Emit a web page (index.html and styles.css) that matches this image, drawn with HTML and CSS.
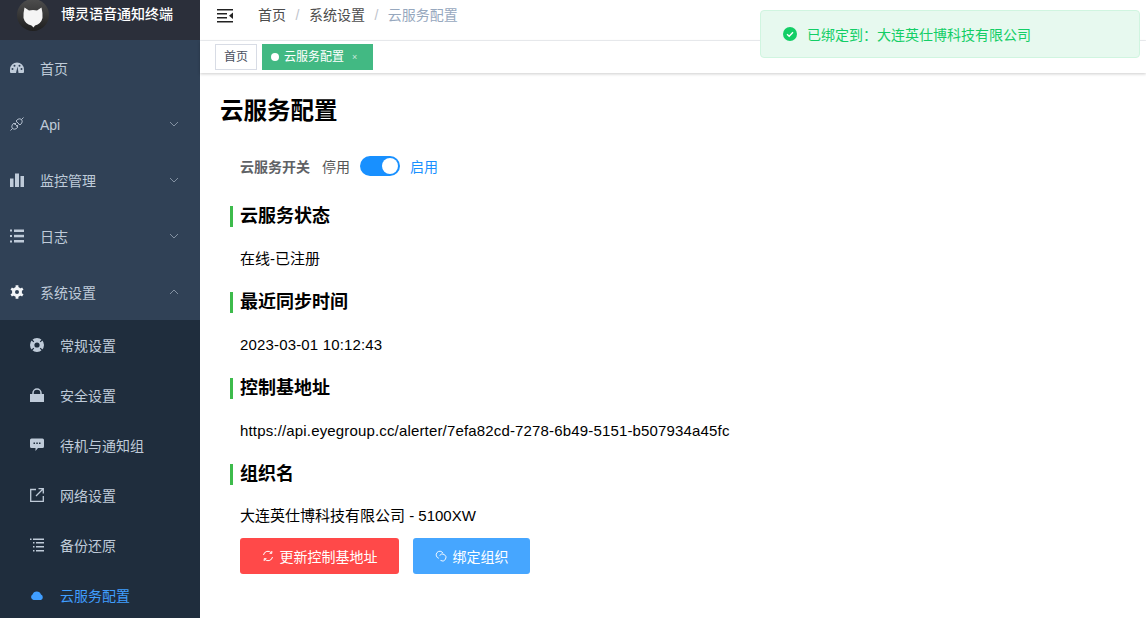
FILE: index.html

```html
<!DOCTYPE html>
<html lang="zh-CN">
<head>
    <meta charset="UTF-8">
    <title>云服务配置</title>
    <link rel="stylesheet" href="styles.css">
</head>
<body>
    <div class="app">
        <aside class="sidebar">
            <div class="logo">
                <div class="logo-img">
                    <svg viewBox="0 0 20 21"><path d="M1.500 0.500 L6 3.500 Q10 2.500 14 3.500 L18.500 0.500 Q20 7 19.500 11 Q18 17 12 18.500 L10.500 20.500 L8.500 18.500 Q2 17 0.500 11 Q0 7 1.500 0.500Z" fill="#f4f4f4"/></svg>
                </div>
                <span class="logo-title">博灵语音通知终端</span>
            </div>
            <ul class="menu">
                <li class="menu-item">
                    <svg class="icon" viewBox="0 0 14 14"><path d="M7 1.500 A7 7 0 0 0 0 8.500 V11 Q0 12 1 12 H13 Q14 12 14 11 V8.500 A7 7 0 0 0 7 1.500Z" fill="#bfcbd9"/><circle cx="2.500" cy="8" r="1" fill="#304156"/><circle cx="4.500" cy="4.800" r="1" fill="#304156"/><circle cx="9.500" cy="4.800" r="1" fill="#304156"/><circle cx="11.500" cy="8" r="1" fill="#304156"/><path d="M6 12 L7.500 5.500 L8.500 12Z" fill="#304156"/></svg>
                    <span>首页</span>
                </li>
                <li class="menu-item">
                    <svg class="icon icon-api" viewBox="0 0 14 14" fill="none" stroke="#bfcbd9" stroke-width="0.900"><path d="M0.500 13.500 L2.500 11.500 M11.500 2.500 L13.500 0.500"/><path d="M4 6 L8 10 L6 11.800 Q4 12.800 2.500 11.500 Q1.200 10 2.200 8Z"/><path d="M6 4 L10 8 L11.800 6 Q12.800 4 11.500 2.500 Q10 1.200 8 2.200Z"/><path d="M4.500 7.500 L6.200 5.800 M6.500 9.500 L8.200 7.800"/></svg>
                    <span class="latin-label">Api</span>
                    <svg class="arrow" viewBox="0 0 10 6"><path d="M1 1 L5 5 L9 1"/></svg>
                </li>
                <li class="menu-item">
                    <svg class="icon" viewBox="0 0 14 14" fill="#bfcbd9"><rect x="0" y="5.500" width="3.500" height="8.500"/><rect x="5" y="0.500" width="4" height="13.500"/><rect x="10.500" y="3" width="3.500" height="11"/></svg>
                    <span>监控管理</span>
                    <svg class="arrow" viewBox="0 0 10 6"><path d="M1 1 L5 5 L9 1"/></svg>
                </li>
                <li class="menu-item">
                    <svg class="icon" viewBox="0 0 14 14" fill="#bfcbd9"><rect x="0" y="0.500" width="2" height="2"/><rect x="4" y="0.500" width="10" height="2.500"/><rect x="0" y="6" width="2" height="2"/><rect x="4" y="5.800" width="10" height="2.500"/><rect x="0" y="11.500" width="2" height="2"/><rect x="4" y="11" width="10" height="2.500"/></svg>
                    <span>日志</span>
                    <svg class="arrow" viewBox="0 0 10 6"><path d="M1 1 L5 5 L9 1"/></svg>
                </li>
                <li class="menu-item">
                    <svg class="icon" viewBox="0 0 14 14"><path d="M7 2 A5 5 0 1 0 7 12 A5 5 0 1 0 7 2Z" fill="#f2f5f8"/><path d="M7 0.300 V13.700 M1.200 3.650 L12.800 10.350 M12.800 3.650 L1.200 10.350" stroke="#f2f5f8" stroke-width="2.800"/><circle cx="7" cy="7" r="2" fill="#304156"/></svg>
                    <span>系统设置</span>
                    <svg class="arrow" viewBox="0 0 10 6"><path d="M1 5 L5 1 L9 5"/></svg>
                </li>
            </ul>
            <ul class="submenu">
                <li class="sub-item">
                    <svg class="icon" viewBox="0 0 14 14"><circle cx="7" cy="7" r="4.800" fill="none" stroke="#bfcbd9" stroke-width="4.400"/><path d="M1.500 1.500 L3.800 3.800 M12.500 1.500 L10.200 3.800 M1.500 12.500 L3.800 10.200 M12.500 12.500 L10.200 10.200" stroke="#1f2d3d" stroke-width="1.200"/></svg>
                    <span>常规设置</span>
                </li>
                <li class="sub-item">
                    <svg class="icon" viewBox="0 0 14 14"><path d="M3 7 V5 A4 4 0 0 1 11 5 V7" fill="none" stroke="#bfcbd9" stroke-width="1.500"/><path d="M0 6 H14 V14 H0Z" fill="#bfcbd9"/></svg>
                    <span>安全设置</span>
                </li>
                <li class="sub-item">
                    <svg class="icon" viewBox="0 0 14 14"><path d="M1.500 0.500 H12.500 Q14 0.500 14 2 V8.500 Q14 10 12.500 10 H8 L5.500 13 V10 H1.500 Q0 10 0 8.500 V2 Q0 0.500 1.500 0.500Z" fill="#bfcbd9"/><rect x="3.500" y="4.500" width="1.500" height="1.500" fill="#1f2d3d"/><rect x="6.300" y="4.500" width="1.500" height="1.500" fill="#1f2d3d"/><rect x="9" y="4.500" width="1.500" height="1.500" fill="#1f2d3d"/></svg>
                    <span>待机与通知组</span>
                </li>
                <li class="sub-item">
                    <svg class="icon" viewBox="0 0 14 14" fill="none" stroke="#bfcbd9" stroke-width="1.300"><path d="M6 1.500 H0.700 V13.300 H13.300 V8"/><path d="M6 8 L13 1 M8.500 0.700 H13.300 V5.500"/></svg>
                    <span>网络设置</span>
                </li>
                <li class="sub-item">
                    <svg class="icon" viewBox="0 0 14 14" fill="#bfcbd9"><rect x="0" y="0.500" width="1.500" height="1.500"/><rect x="3" y="0.500" width="11" height="1.500"/><rect x="3" y="4" width="1.500" height="1.500"/><rect x="6" y="4" width="8" height="1.500"/><rect x="3" y="8" width="1.500" height="1.500"/><rect x="6" y="8" width="8" height="1.500"/><rect x="3" y="12" width="1.500" height="1.500"/><rect x="6" y="12" width="8" height="1.500"/></svg>
                    <span>备份还原</span>
                </li>
                <li class="sub-item active">
                    <svg class="icon" viewBox="0 0 14 14"><path d="M3.500 12 A3 3 0 0 1 2.500 6.500 A4.500 4.500 0 0 1 11 6.500 A3 3 0 0 1 11 12Z" fill="#409eff"/></svg>
                    <span>云服务配置</span>
                </li>
            </ul>
        </aside>

        <div class="main">
            <div class="navbar">
                <svg class="hamburger" viewBox="0 0 16 14" fill="#222"><rect x="0" y="0" width="16" height="1.500"/><rect x="0" y="4" width="10" height="1.500"/><rect x="0" y="8" width="10" height="1.500"/><rect x="0" y="12" width="16" height="1.500"/><path d="M16 3.500 V10 L12 6.800Z"/></svg>
                <div class="breadcrumb">
                    <span>首页</span><i>/</i><span>系统设置</span><i>/</i><span class="current">云服务配置</span>
                </div>
            </div>
            <div class="tags">
                <span class="tag">首页</span>
                <span class="tag tag-active"><b class="dot"></b>云服务配置<em class="close">×</em></span>
            </div>
            <div class="content">
                <h1 class="page-title">云服务配置</h1>
                <div class="switch-row">
                    <label class="switch-label">云服务开关</label>
                    <span class="switch-off">停用</span>
                    <span class="switch"><b></b></span>
                    <span class="switch-on">启用</span>
                </div>
                <h2 class="section-title">云服务状态</h2>
                <p class="section-text">在线-已注册</p>
                <h2 class="section-title">最近同步时间</h2>
                <p class="section-text spaced">2023-03-01 10:12:43</p>
                <h2 class="section-title">控制基地址</h2>
                <p class="section-text spaced">https://api.eyegroup.cc/alerter/7efa82cd-7278-6b49-5151-b507934a45fc</p>
                <h2 class="section-title">组织名</h2>
                <p class="section-text">大连英仕博科技有限公司 - 5100XW</p>
                <div class="actions">
                    <button class="btn btn-red">
                        <svg viewBox="0 0 12 12" fill="none" stroke="#fff"><path d="M1.500 5 A4.500 4.500 0 0 1 9.500 3 M10.500 7 A4.500 4.500 0 0 1 2.500 9"/><path d="M9.800 1 V3.300 H7.500 M2.200 11 V8.700 H4.500"/></svg>
                        更新控制基地址
                    </button>
                    <button class="btn btn-blue">
                        <svg viewBox="0 0 12 12" fill="none" stroke="#fff" stroke-width="0.900"><path d="M3.800 8.300 A3.600 3.600 0 1 1 8 3.200"/><path d="M4.600 5.500 A3.500 3.500 0 1 1 5.500 10.400"/></svg>
                        绑定组织
                    </button>
                </div>
            </div>
        </div>

        <div class="toast">
            <svg viewBox="0 0 14 14"><circle cx="7" cy="7" r="7" fill="#13ce66"/><path d="M4 7.200 L6.200 9.200 L10 5.300" fill="none" stroke="#fff" stroke-width="1.400"/></svg>
            <span>已绑定到：大连英仕博科技有限公司</span>
        </div>
    </div>
</body>
</html>
```

FILE: styles.css

```css
* {
    box-sizing: border-box;
}
body {
    margin: 0;
    font-family: "Liberation Sans", "Noto Sans CJK SC", sans-serif;
    font-size: 14px;
    color: #000;
    background: #fff;
    overflow: hidden;
}
ul {
    list-style: none;
    margin: 0;
    padding: 0;
}
.app {
    display: flex;
    height: 618px;
    overflow: hidden;
}

/* sidebar */
.sidebar {
    width: 200px;
    flex-shrink: 0;
    background: #304156;
    overflow: hidden;
}
.logo {
    height: 40px;
    background: #2b2f3a;
    display: flex;
    align-items: flex-start;
    padding-left: 17px;
}
.logo-img {
    width: 32px;
    height: 32px;
    margin-top: -1px;
    padding-top: 4px;
    border-radius: 50%;
    background: linear-gradient(#4e4e4e, #1f1f1f);
    display: flex;
    align-items: center;
    justify-content: center;
    flex-shrink: 0;
}
.logo-img svg {
    width: 20px;
    height: 21px;
}
.logo-title {
    margin-left: 12px;
    line-height: 29px;
    color: #fff;
    font-size: 14px;
    font-weight: 500;
    white-space: nowrap;
}
.menu-item {
    height: 56px;
    display: flex;
    align-items: center;
    padding-left: 10px;
    color: #bfcbd9;
    font-size: 14px;
    position: relative;
}
.menu-item .icon {
    margin-right: 16px;
}
.icon {
    width: 14px;
    height: 14px;
    flex-shrink: 0;
}
.latin-label {
    padding-top: 2px;
}
.arrow {
    position: absolute;
    right: 21px;
    top: 25px;
    width: 10px;
    height: 6px;
    fill: none;
    stroke: #8391a2;
}
.submenu {
    background: #1f2d3d;
}
.sub-item {
    height: 50px;
    display: flex;
    align-items: center;
    padding-left: 30px;
    color: #bfcbd9;
    font-size: 14px;
}
.sub-item .icon {
    margin-right: 16px;
}
.sub-item.active {
    color: #409eff;
}

/* top */
.main {
    flex: 1;
    min-width: 0;
}
.navbar {
    height: 41px;
    display: flex;
    align-items: center;
    padding: 0 0 12px 17px;
    border-bottom: 1px solid #eef0f3;
}
.hamburger {
    width: 16px;
    height: 14px;
    margin-top: 3px;
}
.breadcrumb {
    margin-left: 25px;
    font-size: 14px;
    color: #4c4c4c;
}
.breadcrumb i {
    font-style: normal;
    color: #c0c4cc;
    margin: 0 9.500px;
}
.breadcrumb .current {
    color: #97a8be;
}
.tags {
    height: 32px;
    display: flex;
    align-items: flex-start;
    gap: 5px;
    padding: 3px 0 0 15px;
    box-shadow: 0 1px 3px rgba(0, 0, 0, 0.2);
}
.tag {
    height: 26px;
    line-height: 24px;
    padding: 0 8px;
    font-size: 12px;
    color: #495060;
    background: #fff;
    border: 1px solid #d8dce5;
}
.tag-active {
    display: flex;
    align-items: center;
    background: #42b983;
    border-color: #42b983;
    color: #fff;
    width: 111px;
}
.dot {
    width: 8px;
    height: 8px;
    border-radius: 50%;
    background: #fff;
    margin-right: 5px;
}
.close {
    font-style: normal;
    font-size: 9px;
    margin-left: 8px;
    opacity: 0.7;
}

/* content */
.content {
    padding: 0 20px;
}
.page-title {
    font-size: 23.500px;
    font-weight: 600;
    margin: 24px 0 0;
    line-height: 28px;
}
.switch-row {
    display: flex;
    align-items: center;
    margin: 31px 0 0 20px;
    height: 20px;
    font-size: 14px;
}
.switch-label {
    font-size: 14px;
    font-weight: 600;
    color: #606266;
    margin-right: 12px;
}
.switch-off {
    color: #555;
}
.switch {
    width: 40px;
    height: 20px;
    border-radius: 10px;
    background: #1890ff;
    margin: 0 10px;
    position: relative;
}
.switch b {
    position: absolute;
    right: 2px;
    top: 2px;
    width: 16px;
    height: 16px;
    border-radius: 50%;
    background: #fff;
}
.switch-on {
    color: #1890ff;
}
.section-title {
    font-size: 18px;
    font-weight: 600;
    line-height: 21px;
    margin: 0 0 0 10px;
    padding-left: 7px;
    border-left: 3px solid #3dbb4c;
}
.switch-row + .section-title {
    margin-top: 30px;
}
.section-text {
    font-size: 15px;
    margin: 21px 0 23px 20px;
    line-height: 21px;
}
.section-text:last-of-type {
    margin-bottom: 0;
    margin-top: 20px;
}
.spaced {
    letter-spacing: 0.16px;
}
.actions {
    display: flex;
    gap: 14px;
    margin: 12px 0 0 20px;
}
.btn {
    height: 36px;
    border: 0;
    border-radius: 3px;
    color: #fff;
    font-family: inherit;
    font-size: 14px;
    display: flex;
    align-items: center;
    justify-content: center;
    gap: 6px;
}
.btn svg {
    width: 12px;
    height: 12px;
}
.btn-red {
    width: 159px;
    background: #ff4949;
}
.btn-blue {
    width: 117px;
    background: #46a6ff;
}

/* toast */
.toast {
    position: absolute;
    top: 10px;
    left: 760px;
    width: 380px;
    height: 48px;
    display: flex;
    align-items: center;
    gap: 10px;
    padding-left: 22px;
    background: #e7f9ef;
    border: 1px solid #d0f5e0;
    border-radius: 4px;
    color: #13ce66;
    font-size: 14px;
}
.toast svg {
    width: 14px;
    height: 14px;
}
```
